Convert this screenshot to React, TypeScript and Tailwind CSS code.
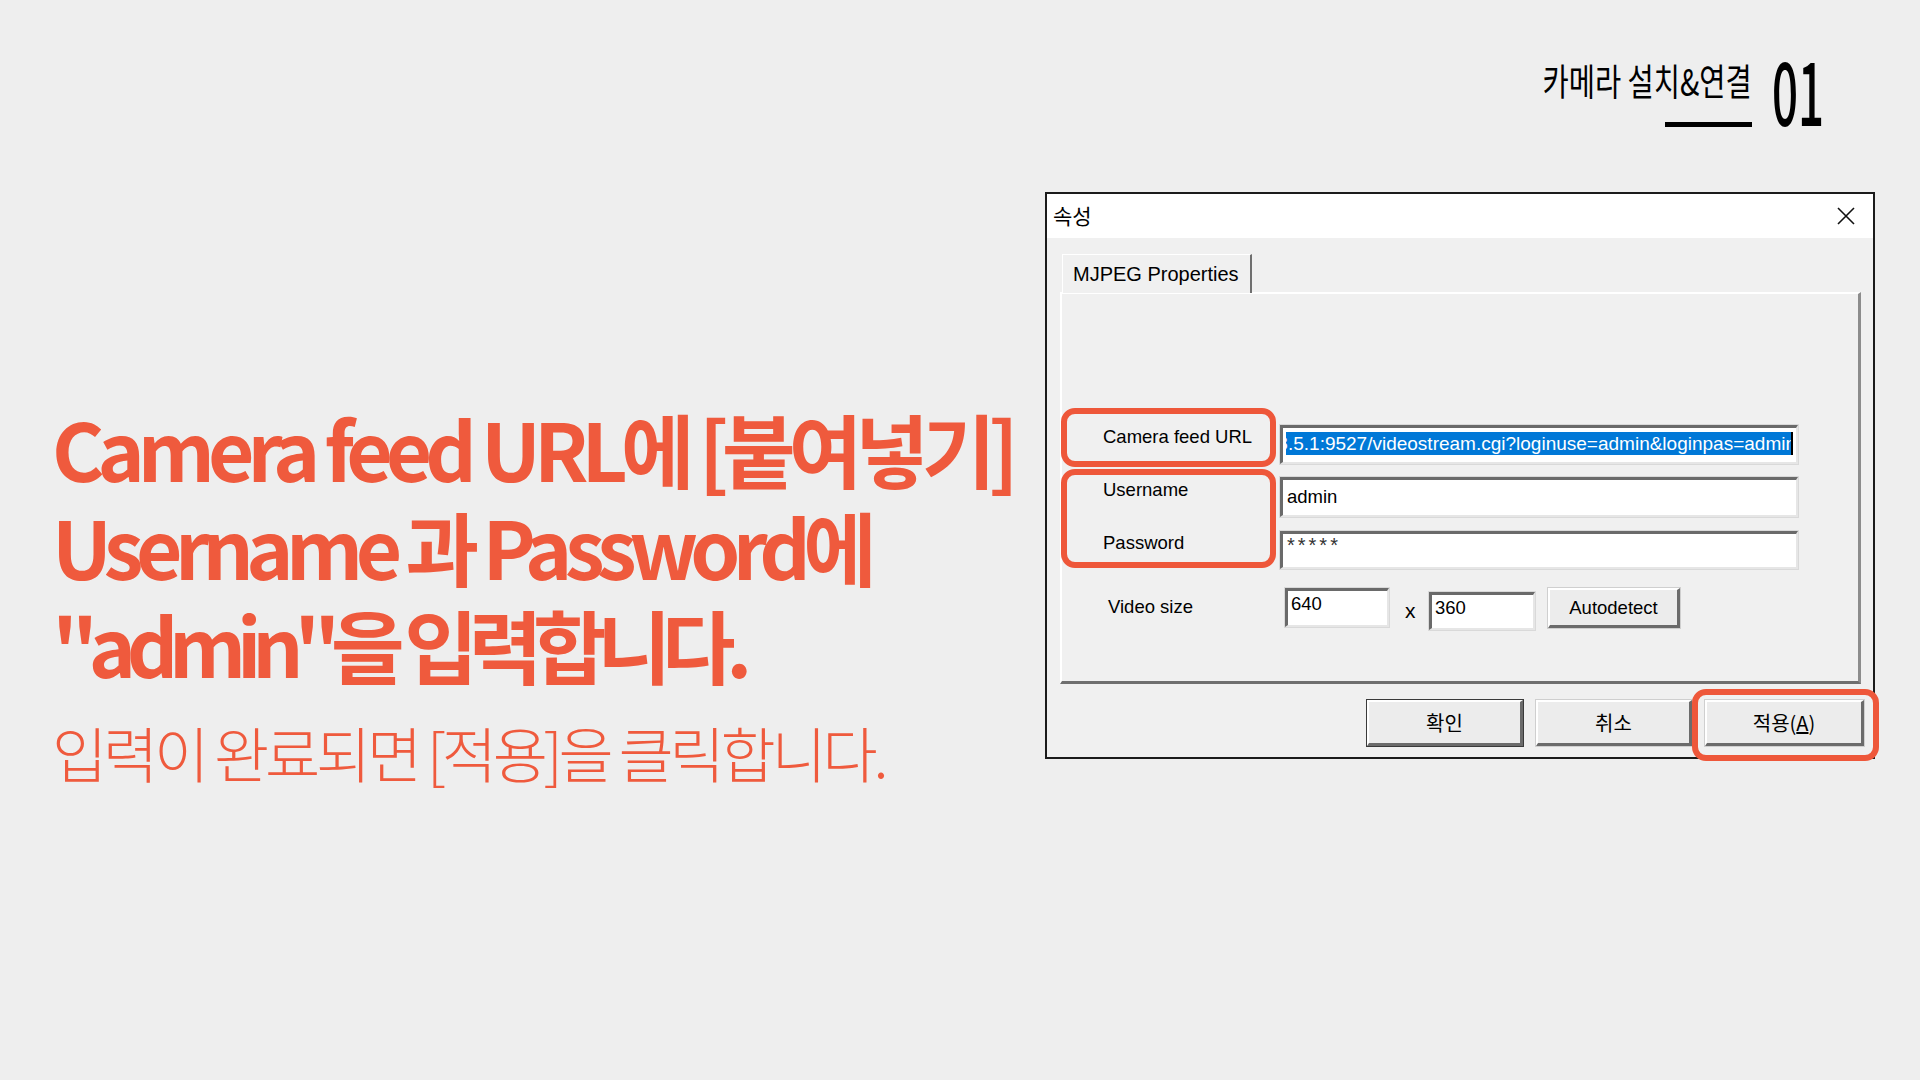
import React from "react";

function Field({ className = "", children }: { className?: string; children?: React.ReactNode }) {
  return (
    <div
      className={
        "bg-white border-t-[3px] border-l-[3px] border-t-[#6a6a6a] border-l-[#6a6a6a] border-r-2 border-b-2 border-r-[#e6e6e6] border-b-[#e6e6e6] outline outline-1 outline-[#d9d9d9] overflow-hidden " +
        className
      }
    >
      {children}
    </div>
  );
}

function Btn({ children, className = "", strong = false }: { children: React.ReactNode; className?: string; strong?: boolean }) {
  return (
    <div
      className={
        "flex items-center justify-center bg-[#ececec] border-t-2 border-l-2 border-t-white border-l-white border-r-[3px] border-b-[3px] border-r-[#6b6b6b] border-b-[#6b6b6b] " +
        (strong ? "outline outline-1 outline-[#3a3a3a] " : "outline outline-1 outline-[#cfcfcf] ") +
        className
      }
    >
      {children}
    </div>
  );
}

export default function App() {
  return (
    <div className="w-[1920px] h-[1080px] bg-[#eeeeee] flex flex-col overflow-hidden font-['Noto_Sans_CJK_KR',sans-serif]">
      {/* Header */}
      <div className="h-[192px] shrink-0 flex justify-end items-start pt-[60px] pr-[48px]">
        <div className="flex flex-col items-end">
          <span className="block text-[37px] leading-[40px] font-normal text-black origin-right scale-x-[0.77] whitespace-nowrap">
            카메라 설치&amp;연결
          </span>
          <div className="w-[87px] h-[5px] bg-black mt-[22px]" />
        </div>
        <span className="block ml-[20px] -mt-[22px] text-[88px] leading-[100px] font-medium text-black origin-left scale-x-[0.52] whitespace-nowrap">
          01
        </span>
      </div>

      {/* Main */}
      <div className="flex items-start">
        {/* Left text */}
        <div className="w-[1045px] shrink-0 pl-[52px] pt-[206px] text-[#ef5a3d] whitespace-nowrap">
          <div className="text-[80px] font-bold leading-[98px]">
            <div className="tracking-[-0.087em]">Camera feed URL에 [붙여넣기]</div>
            <div className="tracking-[-0.093em]">Username 과 Password에</div>
            <div className="tracking-[-0.115em]">"admin"을 입력합니다.</div>
          </div>
          <div className="text-[60px] font-light leading-[70px] mt-[25px] tracking-[-0.07em]">
            입력이 완료되면 [적용]을 클릭합니다.
          </div>
        </div>

        {/* Dialog */}
        <div className="relative w-[830px] h-[567px] shrink-0 border-2 border-[#1b1b1b] bg-[#f0f0f0] flex flex-col font-['Liberation_Sans','Noto_Sans_CJK_KR',sans-serif] text-black">
          {/* Title bar */}
          <div className="h-[44px] bg-white flex items-center justify-between pl-[6px] pr-[18px]">
            <span className="text-[21px] font-['Noto_Sans_CJK_KR',sans-serif]">속성</span>
            <svg width="18" height="18" viewBox="0 0 18 18" fill="none" stroke="#111" strokeWidth="1.6">
              <path d="M1 1 L17 17 M17 1 L1 17" />
            </svg>
          </div>

          {/* Body */}
          <div className="flex-1 flex flex-col pl-[13px] pt-[16px]">
            {/* Tab strip */}
            <div className="flex h-[38px]">
              <div className="ml-[2px] w-[190px] h-[39px] border-t border-l border-white border-r-2 border-r-[#6f6f6f] bg-[#f0f0f0] relative z-10 flex items-center pl-[10px] text-[20px]">
                MJPEG Properties
              </div>
            </div>

            {/* Panel */}
            <div className="relative w-[801px] h-[392px] border-t-2 border-l-2 border-t-white border-l-white border-r-[3px] border-r-[#8c8c8c] border-b-[3px] border-b-[#6f6f6f] text-[18.5px]">
              <div className="flex flex-col pt-[131px]">
                {/* Row 1 */}
                <div className="flex items-start h-[39px]">
                  <div className="w-[218px] pl-[41px] leading-[24px]">Camera feed URL</div>
                  <Field className="w-[518px] h-[39px] flex items-start pt-[4px] pl-[3px]">
                    <div className="w-[507px] h-[23px] bg-[#0078d7] text-white text-[19px] flex justify-end overflow-hidden leading-[23px] relative">
                      <span className="whitespace-nowrap -mr-[3px]">
                        168.5.1:9527/videostream.cgi?loginuse=admin&amp;loginpas=admin
                      </span>
                      <div className="absolute right-0 top-0 w-[2px] h-[23px] bg-black" />
                    </div>
                  </Field>
                </div>
                {/* Row 2 */}
                <div className="flex items-start h-[40px] mt-[13px]">
                  <div className="w-[218px] pl-[41px] leading-[24px] pt-[1px]">Username</div>
                  <Field className="w-[518px] h-[40px] pl-[4px] leading-[28px] pt-[3px]">admin</Field>
                </div>
                {/* Row 3 */}
                <div className="flex items-start h-[38px] mt-[14px]">
                  <div className="w-[218px] pl-[41px] leading-[24px]">Password</div>
                  <Field className="w-[518px] h-[38px] pl-[4px] leading-[20px] pt-[1px] text-[20px] tracking-[3px] text-[#333]">*****</Field>
                </div>
                {/* Row 4 */}
                <div className="flex items-start h-[42px] mt-[19px]">
                  <div className="w-[223px] pl-[46px] leading-[24px] pt-[7px]">Video size</div>
                  <Field className="w-[104px] h-[39px] pl-[3px] leading-[24px] pt-[1px]">640</Field>
                  <div className="w-[40px] pl-[16px] pt-[11px] leading-[24px] text-[21px]">x</div>
                  <Field className="w-[106px] h-[38px] mt-[4px] pl-[3px] leading-[24px] pt-[1px]">360</Field>
                  <Btn className="ml-[13px] w-[132px] h-[40px]">Autodetect</Btn>
                </div>
              </div>

              {/* annotations */}
              <div className="absolute left-[-1px] top-[114px] w-[215px] h-[59px] border-[6px] border-[#ee573a] rounded-[14px]" />
              <div className="absolute left-[-1px] top-[175px] w-[215px] h-[99px] border-[6px] border-[#ee573a] rounded-[14px]" />
            </div>

            {/* Buttons */}
            <div className="flex justify-end gap-[13px] pr-[9px] mt-[16px] text-[20px] font-['Noto_Sans_CJK_KR',sans-serif]">
              <Btn strong className="w-[156px] h-[46px]">확인</Btn>
              <Btn className="w-[156px] h-[46px]">취소</Btn>
              <Btn className="w-[159px] h-[46px]">
                <span>
                  적용(<span className="underline">A</span>)
                </span>
              </Btn>
            </div>
          </div>

          <div className="absolute left-[645px] top-[495px] w-[187px] h-[72px] border-[6px] border-[#ee573a] rounded-[14px]" />
        </div>
      </div>
    </div>
  );
}
